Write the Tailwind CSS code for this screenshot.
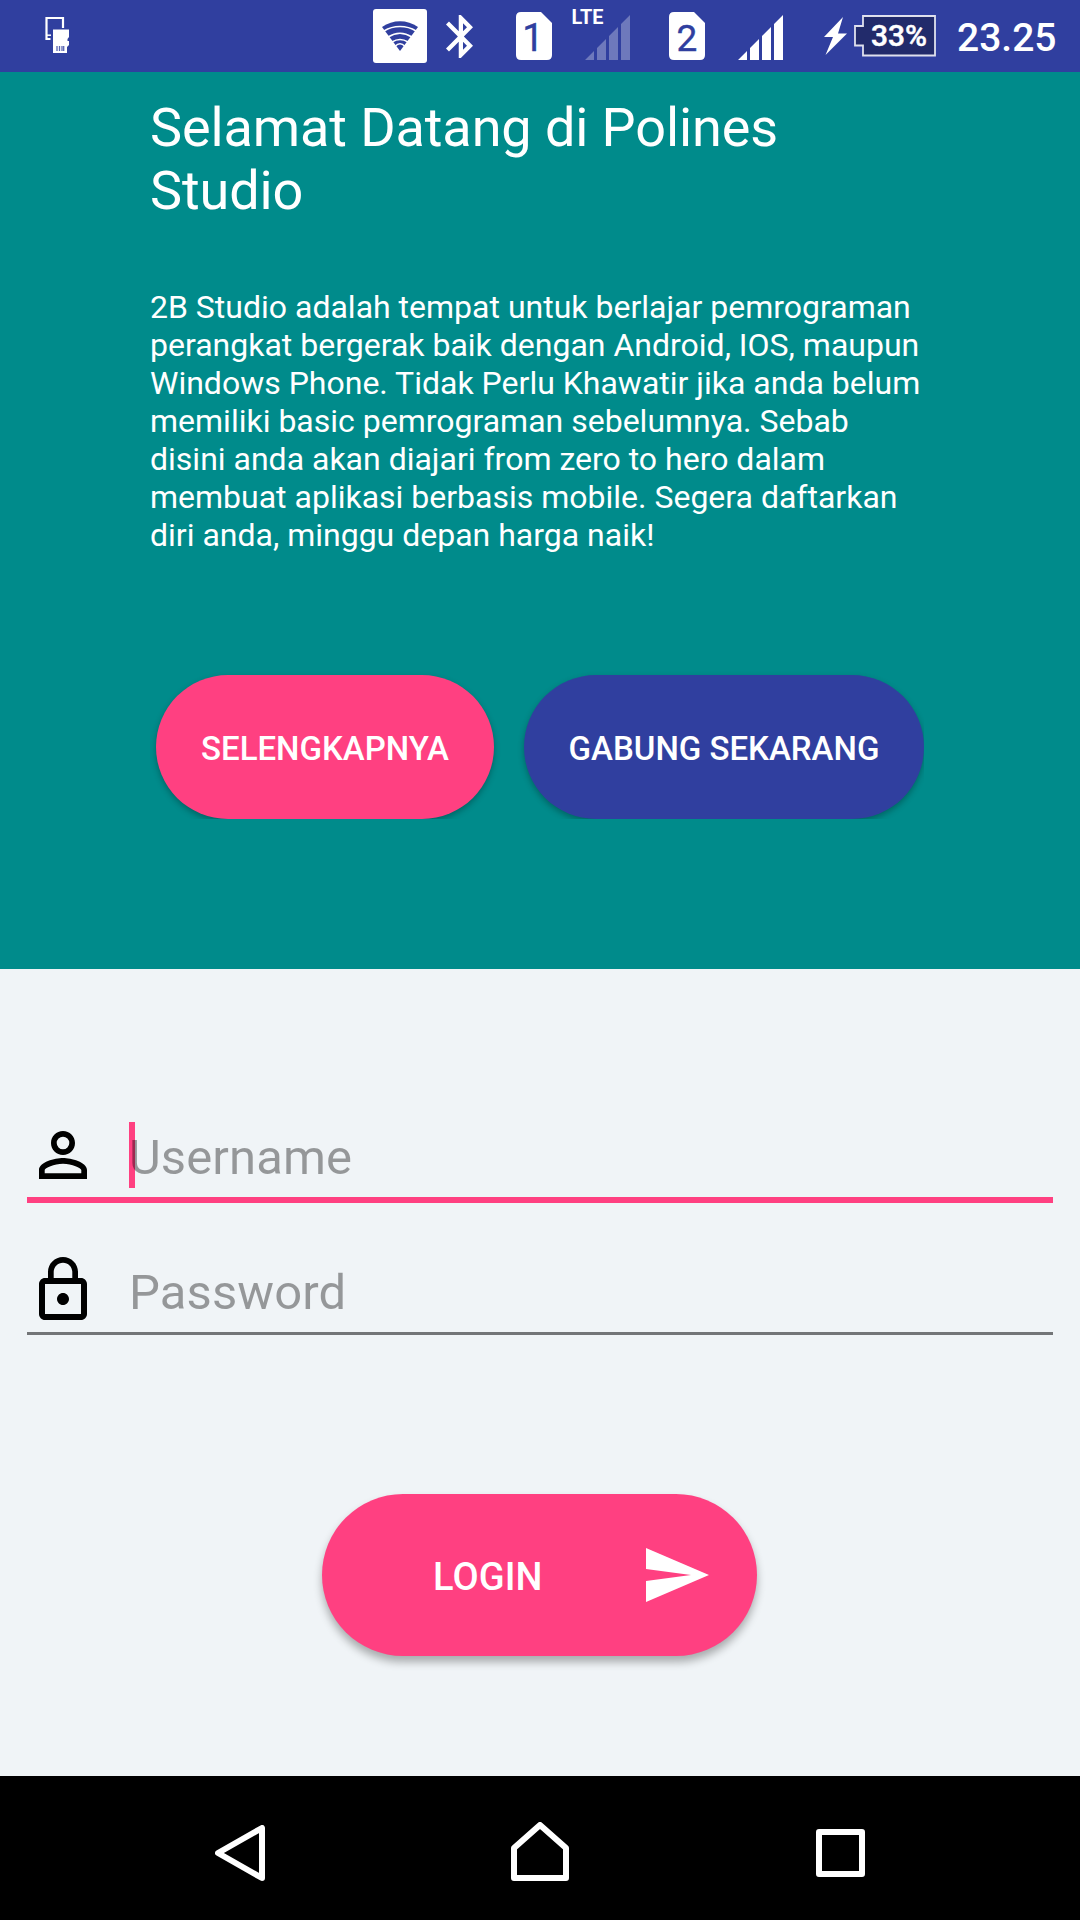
<!DOCTYPE html>
<html lang="id">
<head>
<meta charset="utf-8">
<title>Polines Studio</title>
<script src="https://cdn.jsdelivr.net/npm/@tailwindcss/browser@4"></script>
</head>
<body class="w-[1080px] h-[1920px] flex flex-col overflow-hidden bg-[#f0f4f7] font-['Roboto',sans-serif]">
<header class="h-[72px] shrink-0 flex items-start bg-[#303f9f] pl-[45px] text-white">
  <!-- phone and memory card -->
  <svg class="w-6 h-9 mt-[17px] shrink-0" viewBox="0 0 24 36" fill="none">
    <path d="M5.500 22H1.500V1H18V11" stroke="#fff" stroke-width="2.200"/>
    <path d="M2 18.200H6" stroke="#fff" stroke-width="1.500"/>
    <path d="M8 12.500H24V20L22.500 22V24H24V28L22 30V36H8Z" fill="#fff"/>
    <path d="M12 29V34M14.500 29V34M17 29V34M18.700 29V34" stroke="#303f9f" stroke-opacity=".8" stroke-width="1.300"/>
  </svg>
  <!-- wifi -->
  <svg class="w-[54px] h-[54px] mt-[9px] ml-[304px] shrink-0" viewBox="0 0 54 54">
    <rect width="54" height="54" rx="3" fill="#fff"/>
    <path d="M27 42L9 18C20 10.300 34 10.300 45 18Z" fill="#303f9f"/>
    <path d="M11 22C20.500 16 33.500 16 43 22M15 28C22.500 23.300 31.500 23.300 39 28M19 33C24 30 30 30 35 33M22.500 37C25 34 29 34 31.500 37" stroke="#fff" stroke-width="1.500" fill="none"/>
  </svg>
  <!-- bluetooth -->
  <svg class="w-[27px] h-[43px] mt-[15px] ml-[19px] mr-px shrink-0" viewBox="5 2 12.710 20" preserveAspectRatio="none" fill="#fff">
    <path d="M17.710 7.710L12 2h-1v7.590L6.410 5 5 6.410 10.590 12 5 17.590 6.410 19 11 14.410V22h1l5.710-5.710-4.300-4.290 4.300-4.290zM13 5.830l1.880 1.880L13 9.590V5.830zm1.880 10.460L13 18.170v-3.760l1.880 1.880z"/>
  </svg>
  <!-- SIM 1 -->
  <svg class="w-9 h-12 mt-3 ml-[42px] shrink-0" viewBox="0 0 36 48">
    <path d="M5 0H25L36 11V43Q36 48 31 48H5Q0 48 0 43V5Q0 0 5 0Z" fill="#fff"/>
    <path d="M12 15.500L20.500 12V39H17.500V16L12 18Z" fill="none"/>
    <text x="17" y="39" text-anchor="middle" font-size="38" font-weight="400" stroke="#303f9f" stroke-width=".4" fill="#303f9f">1</text>
  </svg>
  <!-- LTE signal -->
  <svg class="w-[60px] h-[60px] mt-[2px] ml-[20px] shrink-0 overflow-visible" viewBox="0 -6 60 60">
    <text x="-.5" y="16" font-size="21" font-weight="700" fill="#fff" textLength="32" lengthAdjust="spacingAndGlyphs">LTE</text>
    <path d="M13 52L22 43V52ZM25 52V40L34 31V52ZM37 52V28L46 19V52ZM49 52V16L58 7V52Z" fill="#fff" fill-opacity=".3"/>
  </svg>
  <!-- SIM 2 -->
  <svg class="w-9 h-12 mt-3 ml-[37px] shrink-0" viewBox="0 0 36 48">
    <path d="M5 0H25L36 11V43Q36 48 31 48H5Q0 48 0 43V5Q0 0 5 0Z" fill="#fff"/>
    <text x="18" y="39" text-anchor="middle" font-size="37" font-weight="400" stroke="#303f9f" stroke-width=".4" fill="#303f9f">2</text>
  </svg>
  <svg class="w-[45px] h-[45px] mt-[15px] ml-[33px] shrink-0" viewBox="0 0 45 45">
    <path d="M0 45L9 36V45ZM12 45V33L21 24V45ZM24 45V21L33 12V45ZM36 45V9L45 0V45Z" fill="#fff"/>
  </svg>
  <!-- charging -->
  <svg class="w-6 h-[38px] mt-[17px] ml-[41px] shrink-0" viewBox="0 0 24 38">
    <path d="M19 0L0 20H9L1.500 38L23 16.500H14Z" fill="#fff"/>
  </svg>
  <svg class="w-[82px] h-[42px] mt-[15px] ml-[6px] shrink-0" viewBox="0 0 82 42">
    <path d="M9 1H81V40.500H9V30.500H1V11H9Z" fill="#222b6b" stroke="#fff" stroke-opacity=".85" stroke-width="1.800"/>
    <text x="17" y="31" font-size="30" font-weight="500" stroke="#fff" stroke-width=".5" fill="#fff" textLength="56" lengthAdjust="spacingAndGlyphs">33%</text>
  </svg>
  <span class="ml-[21px] mt-[14px] text-[39px] leading-[48px] font-medium">23.25</span>
</header>

<section class="h-[897px] shrink-0 bg-[#008b8b] px-[150px] pt-[24px] text-white">
  <h1 class="text-[54px] leading-[63px] tracking-[-0.1px]">Selamat Datang di Polines<br>Studio</h1>
  <p class="mt-[66px] text-[32px] leading-[38px] whitespace-nowrap">2B Studio adalah tempat untuk berlajar pemrograman<br>perangkat bergerak baik dengan Android, IOS, maupun<br>Windows Phone. Tidak Perlu Khawatir jika anda belum<br>memiliki basic pemrograman sebelumnya. Sebab<br>disini anda akan diajari from zero to hero dalam<br>membuat aplikasi berbasis mobile. Segera daftarkan<br>diri anda, minggu depan harga naik!</p>
  <div class="mt-[101px] w-[774px] h-[164px] pt-5 pl-[6px] flex gap-[30px] [clip-path:inset(0)]">
    <button class="w-[338px] h-[144px] pt-[3px] rounded-full bg-[#ff4081] text-[33px] font-medium shadow-[0_3px_6px_rgba(0,0,0,0.28)]">SELENGKAPNYA</button>
    <button class="w-[400px] h-[144px] pt-[3px] rounded-full bg-[#303f9f] text-[33px] font-medium shadow-[0_3px_6px_rgba(0,0,0,0.28)]">GABUNG SEKARANG</button>
  </div>
</section>

<main class="h-[807px] shrink-0 px-[27px] pt-[146px] flex flex-col">
  <div class="h-[88px] flex items-start border-b-[6px] border-[#ff4081] relative">
    <svg class="w-[72px] h-[72px] mt-[4px] shrink-0" viewBox="0 0 24 24">
      <path d="M12 5.900a2.100 2.100 0 1 1 0 4.200 2.100 2.100 0 0 1 0-4.200m0 9c2.970 0 6.100 1.460 6.100 2.100v1.100H5.900V17c0-.64 3.130-2.100 6.100-2.100M12 4C9.790 4 8 5.790 8 8s1.790 4 4 4 4-1.790 4-4-1.790-4-4-4zm0 9c-2.670 0-8 1.340-8 4v3h16v-3c0-2.660-5.330-4-8-4z"/>
    </svg>
    <span class="absolute left-[102px] top-[7px] w-[6px] h-[66px] bg-[#ff4081]"></span>
    <span class="relative ml-[30px] mt-[15px] text-[49px] leading-[56px] tracking-[0.1px] text-black/38">Username</span>
  </div>
  <div class="mt-[47px] h-[85px] flex items-start border-b-[3px] border-[#737578]">
    <svg class="w-[72px] h-[72px] mt-[4px] shrink-0" viewBox="0 0 24 24">
      <path d="M12 17c1.100 0 2-.9 2-2s-.9-2-2-2-2 .9-2 2 .9 2 2 2zm6-9h-1V6c0-2.760-2.240-5-5-5S7 3.240 7 6v2H6c-1.100 0-2 .9-2 2v10c0 1.100.9 2 2 2h12c1.100 0 2-.9 2-2V10c0-1.100-.9-2-2-2zM8.900 6c0-1.710 1.390-3.100 3.100-3.100s3.100 1.390 3.100 3.100v2H8.900V6zM18 20H6V10h12v10z"/>
    </svg>
    <span class="ml-[30px] mt-[15px] text-[49px] leading-[56px] tracking-[0.1px] text-black/38">Password</span>
  </div>
  <button class="mt-[159px] ml-[295px] w-[435px] h-[162px] rounded-full bg-[#ff4081] shadow-[0_6px_9px_rgba(0,0,0,0.3)] flex items-center pl-[111px] text-white">
    <span class="w-[110px] text-left text-[38px] leading-[44px] tracking-[0.1px] font-medium mt-[4px]">LOGIN</span>
    <svg class="w-[63px] h-[54px] ml-[103px] shrink-0" viewBox="0 0 63 54"><path d="M0 0L63 27L0 54V33L45 27L0 21Z" fill="#fff"/></svg>
  </button>
</main>

<nav class="h-36 shrink-0 bg-black flex items-start">
  <svg class="w-[50px] h-[56px] mt-[49px] ml-[215px]" viewBox="0 0 50 56" fill="none" stroke="#fff" stroke-width="6" stroke-linejoin="round"><path d="M47 3V53L3 28Z"/></svg>
  <svg class="w-[58px] h-[59px] mt-[46px] ml-[246px]" viewBox="0 0 58 59" fill="none" stroke="#fff" stroke-width="6" stroke-linejoin="round"><path d="M29 3L55 26V56H3V26Z"/></svg>
  <svg class="w-[49px] h-[48px] mt-[53px] ml-[247px]" viewBox="0 0 49 48" fill="none" stroke="#fff" stroke-width="6" stroke-linejoin="round"><path d="M3 3H46V45H3Z"/></svg>
</nav>
</body>
</html>
